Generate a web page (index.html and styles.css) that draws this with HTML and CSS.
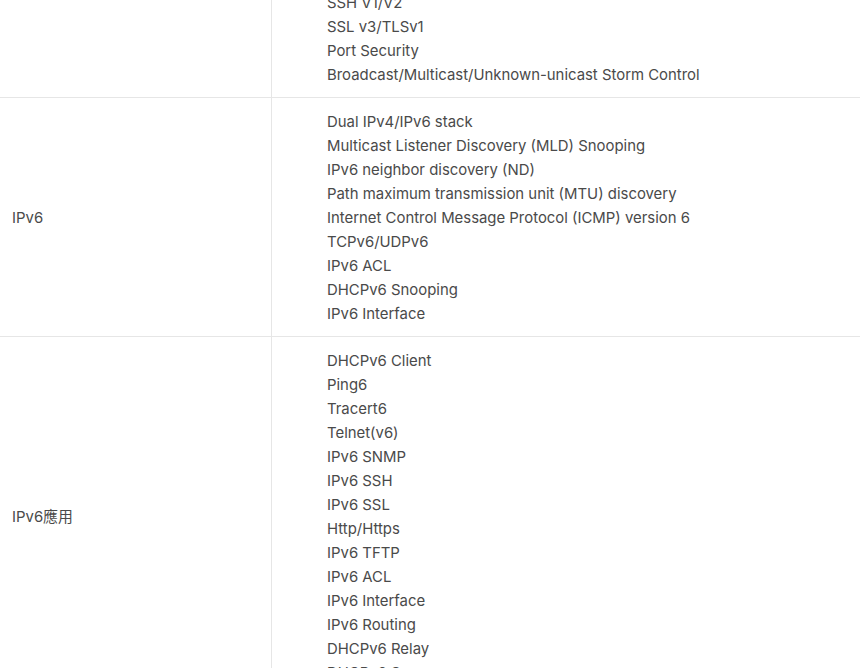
FILE: index.html
```html
<!DOCTYPE html>
<html>
  <head>
    <meta charset="utf-8">
    <link rel="stylesheet" href="styles.css">
  </head>
  <body>
    <table class="spec">
      <tr>
        <td class="label">安全性</td>
        <td class="values">
          <ul>
            <li>802.1X</li>
            <li>Port Isolation</li>
            <li>ACL</li>
            <li>IP-MAC-Port Binding</li>
            <li>DHCP Snooping</li>
            <li>ARP Inspection</li>
            <li id="anchor">SSH V1/V2</li>
            <li>SSL v3/TLSv1</li>
            <li>Port Security</li>
            <li>Broadcast/Multicast/Unknown-unicast Storm Control</li>
          </ul>
        </td>
      </tr>
      <tr>
        <td class="label">IPv6</td>
        <td class="values">
          <ul>
            <li>Dual IPv4/IPv6 stack</li>
            <li>Multicast Listener Discovery (MLD) Snooping</li>
            <li>IPv6 neighbor discovery (ND)</li>
            <li>Path maximum transmission unit (MTU) discovery</li>
            <li>Internet Control Message Protocol (ICMP) version 6</li>
            <li>TCPv6/UDPv6</li>
            <li>IPv6 ACL</li>
            <li>DHCPv6 Snooping</li>
            <li>IPv6 Interface</li>
          </ul>
        </td>
      </tr>
      <tr>
        <td class="label">IPv6應用</td>
        <td class="values">
          <ul>
            <li>DHCPv6 Client</li>
            <li>Ping6</li>
            <li>Tracert6</li>
            <li>Telnet(v6)</li>
            <li>IPv6 SNMP</li>
            <li>IPv6 SSH</li>
            <li>IPv6 SSL</li>
            <li>Http/Https</li>
            <li>IPv6 TFTP</li>
            <li>IPv6 ACL</li>
            <li>IPv6 Interface</li>
            <li>IPv6 Routing</li>
            <li>DHCPv6 Relay</li>
            <li>DHCPv6 Server</li>
          </ul>
        </td>
      </tr>
    </table>

    <script>
      // page is shown scrolled into the middle of the spec table
      const anchor = document.getElementById("anchor");
      const anchorTop = anchor.getBoundingClientRect().top + window.scrollY;
      window.scrollTo(0, anchorTop + 9);
    </script>
  </body>
</html>
```

FILE: styles.css
```css
body {
  font-family: Inter, "Noto Sans CJK TC", sans-serif;
  font-size: 14.9px;
  color: #4a4a4a;
  margin: 0;
  padding: 0 0 400px;
  background: #fff;
}
.spec {
  width: 100%;
  border-collapse: collapse;
}
.spec tr {
  border-bottom: 1px solid #e6e6e6;
}
.spec td {
  padding: 12px 12px 10px;
  line-height: 24px;
  vertical-align: middle;
}
.spec .label {
  width: 247px;
  border-right: 1px solid #e6e6e6;
}
.spec .values {
  padding-left: 15px;
}
.spec ul {
  list-style: none;
  margin: 0;
  padding: 0 0 0 40px;
}
```
